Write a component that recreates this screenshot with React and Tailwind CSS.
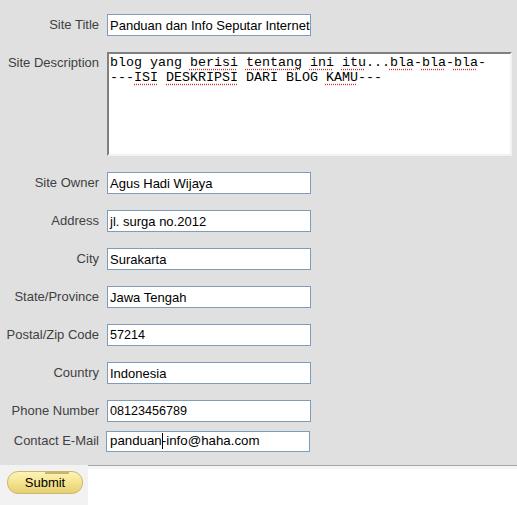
import React from "react";

const U = ({ children }) => (
  <span className="underline decoration-dotted decoration-[#d03030] underline-offset-[3px]">{children}</span>
);

function Row({ label, value, mb = "mb-[16px]", valueClass = "text-[13px]" }) {
  return (
    <div className={`flex items-center h-[22px] ${mb}`}>
      <div className="w-[99px] text-right text-[13px] text-[#404040] leading-none whitespace-nowrap pb-[2px]">{label}</div>
      <div className={`ml-[8px] w-[204px] h-[22px] bg-white border border-[#7f9db9] flex items-center pl-[2px] overflow-hidden whitespace-nowrap text-black leading-none ${valueClass}`}>
        {value}
      </div>
    </div>
  );
}

export default function App() {
  return (
    <div className="w-[517px] h-[505px] bg-white" style={{ fontFamily: '"Liberation Sans", Arial, sans-serif' }}>
      <div className="bg-[#e0e0e0] h-[465px] pt-[14px]">
        <Row label="Site Title" value="Panduan dan Info Seputar Internet" />
        <div className="flex items-start h-[104px] mb-[16px]">
          <div className="w-[99px] text-right text-[13px] text-[#404040] leading-[15px] pt-[3px] whitespace-nowrap">Site Description</div>
          <div
            className="ml-[8px] w-[405px] h-[104px] bg-white border-2 border-t-[#808080] border-l-[#808080] border-b-[#f2f2f2] border-r-[#f2f2f2] pl-[1px] pt-[1px] text-[13.33px] leading-[15px] text-black whitespace-pre"
            style={{ fontFamily: '"Liberation Mono", "Courier New", monospace' }}
          >
            <div>
              blog yang <U>berisi</U> <U>tentang</U> <U>ini</U> <U>itu</U>...<U>bla</U>-<U>bla</U>-<U>bla</U>-
            </div>
            <div>
              ---<U>ISI</U> <U>DESKRIPSI</U> DARI BLOG <U>KAMU</U>---
            </div>
          </div>
        </div>
        <Row label="Site Owner" value="Agus Hadi Wijaya" />
        <Row label="Address" value="jl. surga no.2012" />
        <Row label="City" value="Surakarta" />
        <Row label="State/Province" value="Jawa Tengah" />
        <Row label="Postal/Zip Code" value="57214" valueClass="text-[12.6px]" />
        <Row label="Country" value="Indonesia" />
        <Row label="Phone Number" value="08123456789" mb="mb-[8px]" valueClass="text-[12.6px]" />
        <div className="flex items-center h-[22px]">
          <div className="w-[99px] text-right text-[13px] text-[#404040] leading-none whitespace-nowrap pb-[2px]">Contact E-Mail</div>
          <div className="ml-[7px] w-[204px] h-[21px] bg-white border border-[#7f9db9] flex items-center pl-[3px] overflow-hidden whitespace-nowrap text-[13.3px] text-black leading-none">
            <span>
              panduan<span className="inline-block w-px h-[16px] bg-black align-middle"></span>
              <span className="-ml-px">-</span>info@haha.com
            </span>
          </div>
        </div>
      </div>
      <div className="flex h-[40px]">
        <div className="w-[88px] bg-[#f2f2f2] pt-[6px] pl-[7px]">
          <div className="relative w-[76px] h-[23px]">
            <div className="absolute left-[38px] top-0 w-[24px] h-[3px] bg-[#c9b46c] rounded-t-[2px]"></div>
            <button className="w-[76px] h-[23px] rounded-[11px] border border-[#cbb86e] bg-gradient-to-b from-[#fcf3b8] via-[#f5e38d] to-[#e6cf72] text-[13px] text-black leading-none flex items-center justify-center">
              Submit
            </button>
          </div>
        </div>
        <div className="flex-1 flex flex-col">
          <div className="h-px bg-[#a6a6a6]"></div>
          <div className="h-[3px] bg-[#f4f4f4]"></div>
          <div className="flex-1 bg-white"></div>
        </div>
      </div>
    </div>
  );
}
